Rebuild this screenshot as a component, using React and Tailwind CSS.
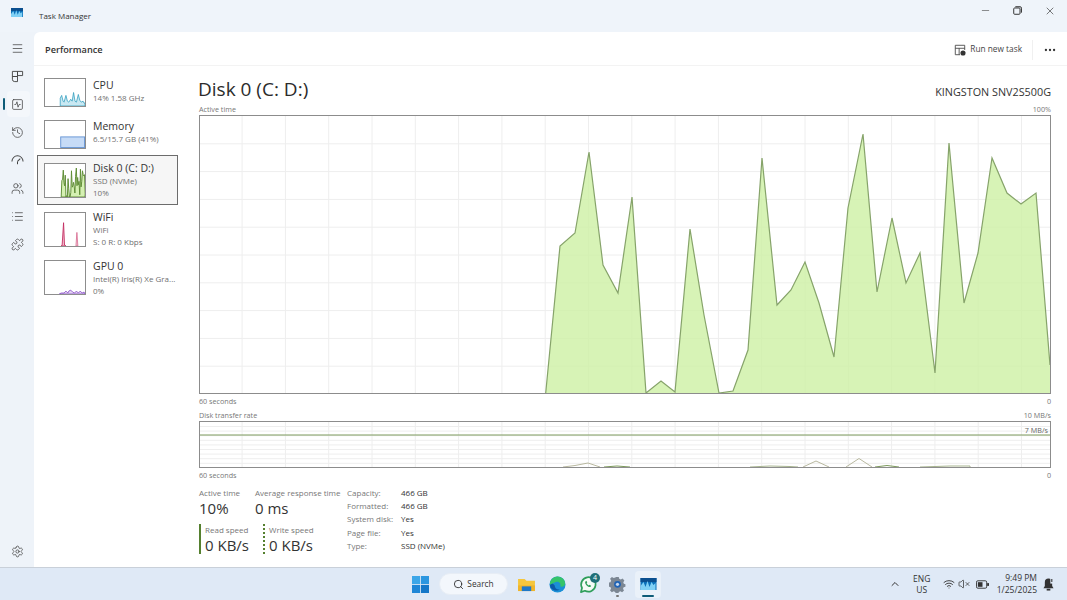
import { Menu, SquareActivity, History, Users, List, Puzzle, Settings, MoreHorizontal, Minus, X, Search, ChevronUp, Wifi, VolumeX } from 'lucide-react'

// main chart points, page coordinates
const activeTime = [
  [545.7, 393], [560, 246], [575, 233], [589, 152], [603, 265], [618, 293], [632, 197], [646, 393],
  [661, 381], [675, 392], [690, 229], [704, 315], [719, 393], [733, 391], [748, 350], [762, 158],
  [777, 305], [791, 290], [805, 262], [819, 303], [834, 357], [848, 208], [863, 134], [877, 292],
  [892, 218], [906, 283], [920, 253], [935, 373], [949, 143], [964, 303], [978, 253], [992, 158],
  [1007, 193], [1021, 204], [1036, 193], [1050, 365],
]

const pts = (list) => list.map(p => p.join(',')).join(' ')
const mainFill = pts([...activeTime, [1050, 393]])
const vLines = Array.from({ length: 20 }, (_, i) => 1021.5 - i * 43.3)
const hLines = Array.from({ length: 9 }, (_, i) => 143.8 + i * 27.8)
const rateLines = Array.from({ length: 9 }, (_, i) => 426.5 + i * 4.6)

// disk thumbnail is the same trace squeezed down
const diskThumb = activeTime.map(([x, y]) => [
  +(17 + (x - 545.7) * 0.05).toFixed(1),
  +(34 - (393 - y) * 0.115).toFixed(1),
])

const perfItems = [
  { name: 'CPU', lines: ['14%  1.58 GHz'], h: 'h-[41px]', thumb: 'cpu', lift: '-mt-[2px]' },
  { name: 'Memory', lines: ['6.5/15.7 GB (41%)'], h: 'h-[42px]', thumb: 'mem', lift: '-mt-[4px]' },
  { name: 'Disk 0 (C: D:)', lines: ['SSD (NVMe)', '10%'], h: 'h-[50px]', thumb: 'disk', selected: true },
  { name: 'WiFi', lines: ['WiFi', 'S: 0 R: 0 Kbps'], h: 'h-[48px]', thumb: 'wifi' },
  { name: 'GPU 0', lines: ['Intel(R) Iris(R) Xe Gra...', '0%'], h: 'h-[48px]', thumb: 'gpu', lift: 'mt-[2px]' },
]

function Thumb({ kind }) {
  const tall = kind === 'disk' || kind === 'wifi' || kind === 'gpu'
  const h = tall ? 34 : 28
  return (
    <div className={`w-[42px] shrink-0 border border-[#8d8d8d] bg-white ${tall ? 'h-[35px]' : 'h-[29px]'}`}>
      <svg viewBox={`0 0 42 ${h}`} className="block w-full h-full" preserveAspectRatio="none">
        {kind === 'cpu' && (
          <polygon
            points="16,28 16,20 17.5,17 19,23 20,24 22,17 23.5,23 25,24 27,21 28.5,23 30,14 31.5,23 33,24 35,16 36.5,22 38,24 40,23 41,25 42,25 42,28"
            fill="#c9e8f2" stroke="#2f9dbd" strokeWidth="0.8"
          />
        )}
        {kind === 'mem' && <rect x="16.5" y="16.5" width="25" height="11" fill="#c6dbf6" stroke="#6a98d6" />}
        {kind === 'disk' && (
          <polygon points={pts([...diskThumb, [42, 34]])} fill="#d5f0b2" stroke="#5f8c35" strokeWidth="1" />
        )}
        {kind === 'wifi' && (
          <>
            <polygon points="17,34 18,33 19.5,10 20.5,33 22,34" fill="#f3bccd" stroke="#c2285e" strokeWidth="0.9" />
            <polygon points="32.5,34 33.5,20 34.5,34" fill="#f5cfdb" stroke="#d5648b" strokeWidth="0.8" />
          </>
        )}
        {kind === 'gpu' && (
          <polygon
            points="15,34 17,33 20,33 22,31 24,33 25,31 27,30 29,32 31,33 33,31 35,33 37,31 39,33 41,32 42,34"
            fill="#e3d4f3" stroke="#8c55c8" strokeWidth="0.9"
          />
        )}
      </svg>
    </div>
  )
}

function PerfRow({ item }) {
  return (
    <div className={`${item.h} flex items-center gap-[7px] pl-[6px] ${item.selected ? 'border border-[#6c6c6c] bg-[#f6f6f6]' : 'border border-transparent'}`}>
      <Thumb kind={item.thumb} />
      <div className={`min-w-0 ${item.lift || ''}`}>
        <div className="text-[10.5px] leading-[13px] text-[#333]">{item.name}</div>
        {item.lines.map(l => (
          <div key={l} className="text-[8px] leading-[11.5px] text-[#707070] whitespace-nowrap">{l}</div>
        ))}
      </div>
    </div>
  )
}

function ProcessesIcon() {
  return (
    <svg viewBox="0 0 14 14" className="w-[13px] h-[13px]" fill="none" stroke="#444" strokeWidth="1">
      <path d="M1.5 1.5h5.5v5.5h-5.5zM7 1.5h5.5v4.5h-5.5zM1.5 7h5.5v5.5h-3a2.5 2.5 0 0 1-2.5-2.5z" />
    </svg>
  )
}

function StartupIcon() {
  return (
    <svg viewBox="0 0 14 14" className="w-[13px] h-[13px]" fill="none" stroke="#444" strokeWidth="1.1">
      <path d="M1 8a6 6 0 0 1 12 0" />
      <path d="M7 8l3-3" />
      <path d="M7 8v3" />
    </svg>
  )
}

function Sidebar() {
  const iconClass = 'w-[13px] h-[13px] text-[#444]'
  const icons = [
    <Menu key="m" className={iconClass} strokeWidth={1.4} />,
    <ProcessesIcon key="p" />,
    <SquareActivity key="a" className={iconClass} strokeWidth={1.4} />,
    <History key="h" className={iconClass} strokeWidth={1.4} />,
    <StartupIcon key="s" />,
    <Users key="u" className={iconClass} strokeWidth={1.4} />,
    <List key="l" className={iconClass} strokeWidth={1.4} />,
    <Puzzle key="z" className={iconClass} strokeWidth={1.4} />,
  ]
  return (
    <div className="w-[34px] shrink-0 flex flex-col bg-[#eef3f9]">
      <div className="flex flex-col items-center pt-[2px]">
        {icons.map((icon, i) => (
          <div key={i} className="relative h-[28px] w-full flex items-center justify-center">
            {i === 2 && (
              <>
                <div className="absolute left-[7px] right-[4px] top-[1px] bottom-[1px] rounded bg-[#f4f7fb]" />
                <div className="absolute left-[3px] top-[8px] h-[12px] w-[2px] rounded bg-[#0f5c78]" />
              </>
            )}
            <span className="relative flex">{icon}</span>
          </div>
        ))}
      </div>
      <div className="mt-auto h-[22px] flex items-start justify-center">
        <Settings className={iconClass} strokeWidth={1.4} />
      </div>
    </div>
  )
}

function MainChart() {
  return (
    <div className="h-[279px] border border-[#8c8c8c]">
      <svg viewBox="200 116 850 277" className="block w-full h-full">
        {hLines.map(y => <line key={y} x1="200" x2="1050" y1={y} y2={y} stroke="#eeeeee" />)}
        {vLines.map(x => <line key={x} x1={x} x2={x} y1="116" y2="393" stroke="#eeeeee" />)}
        <polygon points={mainFill} fill="#cdf0a4" fillOpacity="0.8" />
        <polyline points={pts(activeTime)} fill="none" stroke="#86a36a" strokeWidth="1.2" />
      </svg>
    </div>
  )
}

function RateChart() {
  return (
    <div className="relative h-[47px] border border-[#8c8c8c]">
      <svg viewBox="200 422 850 45" className="block w-full h-full">
        {rateLines.map(y => <line key={y} x1="200" x2="1050" y1={y} y2={y} stroke="#eeeeee" />)}
        {vLines.map(x => <line key={x} x1={x} x2={x} y1="422" y2="467" stroke="#eeeeee" />)}
        <line x1="200" x2="1050" y1="435" y2="435" stroke="#7d9a5c" strokeWidth="1.2" />
        <polyline points="563,467 575,465.5 588,463 600,467" fill="none" stroke="#b9b9a0" />
        <polyline points="604,467 617,466 630,467" fill="none" stroke="#7d9a5c" />
        <polyline points="750,467 770,466 790,466.5 798,467" fill="none" stroke="#a7b48f" />
        <polyline points="803,467 816,461 829,467" fill="none" stroke="#b9b9a0" />
        <polyline points="846,467 859,458.5 872,467" fill="none" stroke="#b9b9a0" />
        <polyline points="875,467 887,465.5 899,467" fill="none" stroke="#7d9a5c" />
        <polyline points="920,467 950,466 970,466 970,467" fill="none" stroke="#a7b48f" />
      </svg>
      <span className="absolute right-[2px] top-[3px] text-[7.2px] leading-[10px] text-[#666]">7 MB/s</span>
    </div>
  )
}

function AxisLabels({ left, right, className }) {
  return (
    <div className={`flex justify-between text-[7.2px] leading-[10px] text-[#777] ${className}`}>
      <span>{left}</span>
      <span>{right}</span>
    </div>
  )
}

function Stat({ label, value, className }) {
  return (
    <div className={className}>
      <div className="text-[8px] leading-[12px] text-[#777] whitespace-nowrap">{label}</div>
      <div className="text-[15px] leading-[18px] text-[#333] whitespace-nowrap">{value}</div>
    </div>
  )
}

function Details() {
  const facts = [['Capacity:', '466 GB'], ['Formatted:', '466 GB'], ['System disk:', 'Yes'], ['Page file:', 'Yes'], ['Type:', 'SSD (NVMe)']]
  return (
    <div className="flex-1 min-w-0 pl-[9px] pr-[16px] flex flex-col">
      <div className="h-[37px] flex items-end justify-between">
        <div className="-ml-[1px] text-[19px] leading-[28px] text-[#2b2b2b]">Disk 0 (C: D:)</div>
        <div className="text-[10.8px] leading-[16px] text-[#333] pb-[3px]">KINGSTON SNV2S500G</div>
      </div>
      <AxisLabels left="Active time" right="100%" className="h-[12px] items-center" />
      <MainChart />
      <AxisLabels left="60 seconds" right="0" className="mt-[2px] h-[10px]" />
      <AxisLabels left="Disk transfer rate" right="10 MB/s" className="mt-[4px] h-[10px]" />
      <div className="mt-[1px]"><RateChart /></div>
      <AxisLabels left="60 seconds" right="0" className="mt-[2px] h-[10px]" />
      <div className="mt-[7px] flex">
        <div className="w-[148px] shrink-0">
          <div className="flex">
            <Stat label="Active time" value="10%" className="w-[56px] shrink-0" />
            <Stat label="Average response time" value="0 ms" />
          </div>
          <div className="flex mt-[7px]">
            <div className="w-[64px] border-l-2 border-[#55802f] pl-[4px] h-[30px]">
              <Stat label="Read speed" value="0 KB/s" />
            </div>
            <div className="border-l-2 border-dotted border-[#55802f] pl-[4px] h-[30px]">
              <Stat label="Write speed" value="0 KB/s" />
            </div>
          </div>
        </div>
        <div className="-mt-[1px]">
          {facts.map(([k, v]) => (
            <div key={k} className="flex h-[13.4px] items-center text-[8px]">
              <span className="w-[54px] text-[#777]">{k}</span>
              <span className="text-[#333]">{v}</span>
            </div>
          ))}
        </div>
      </div>
    </div>
  )
}

function TaskManagerIcon({ size = 'w-[12px] h-[9px]' }) {
  return (
    <svg viewBox="0 0 16 12" className={size}>
      <rect width="16" height="12" fill="#0a6fb8" />
      <rect width="16" height="4" fill="#0a4f8f" />
      <path d="M0 12V8l3-4 2 5 2-6 2 6 2-5 2 3 2-2v7z" fill="#7fd0f5" />
    </svg>
  )
}

function WindowsLogo() {
  return (
    <svg viewBox="0 0 16 16" className="w-[17px] h-[17px]">
      <rect x="0" y="0" width="7.6" height="7.6" fill="#3ca6e8" />
      <rect x="8.4" y="0" width="7.6" height="7.6" fill="#2b96e0" />
      <rect x="0" y="8.4" width="7.6" height="7.6" fill="#1f86d6" />
      <rect x="8.4" y="8.4" width="7.6" height="7.6" fill="#1577c8" />
    </svg>
  )
}

function FolderIcon() {
  return (
    <svg viewBox="0 0 18 16" className="w-[17px] h-[15px]">
      <path d="M0 2h7l2 2h9v11H0z" fill="#f5c63c" />
      <rect x="0" y="9" width="18" height="6" fill="#f0b429" />
      <rect x="4" y="10" width="10" height="5" fill="#1e78c8" />
    </svg>
  )
}

function EdgeIcon() {
  return (
    <svg viewBox="0 0 18 18" className="w-[17px] h-[17px]">
      <circle cx="9" cy="9" r="8.5" fill="#1b8fd6" />
      <path d="M1 9a8 8 0 0 1 16-1c0 3-3 4-5 3 1-4-3-6-6-4-3 1-4 3-5 2z" fill="#35c46a" />
      <path d="M6 10c0 3 3 5 6 4-4 3-10 1-11-4 1-2 3-3 5 0z" fill="#0c5aa8" />
    </svg>
  )
}

function WhatsAppIcon() {
  return (
    <div className="relative w-[20px] h-[20px]">
      <svg viewBox="0 0 20 20" className="w-[19px] h-[19px] mt-[1px]" fill="none">
        <path d="M2 18l1.2-4.4A7.6 7.6 0 1 1 6.2 16.6z" fill="#f4fbf6" stroke="#2f9e5b" strokeWidth="1.8" strokeLinejoin="round" />
        <path d="M7 6.5c-1 1-.6 2.6.8 4.2 1.5 1.7 3.2 2.4 4.4 1.6l.6-1-1.8-1-.8.7c-.9-.4-1.7-1.2-2.2-2.2l.7-.8-.9-1.9z" fill="#2f9e5b" />
      </svg>
      <span className="absolute -right-[1px] -top-[2px] w-[10px] h-[10px] rounded-full bg-[#1f6f78] text-white text-[7px] leading-[10px] text-center">4</span>
    </div>
  )
}

function GearApp() {
  return (
    <svg viewBox="0 0 18 18" className="w-[17px] h-[17px]">
      <path d="M7.5 1h3l.5 2.2 1.8.8 2-1.2 2 2.2-1.2 2 .6 1.7 1.8.5v3l-2 .5-.7 1.7 1.1 2-2.1 2-2-1.1-1.7.6-.6 2h-3l-.5-2-1.8-.7-2 1.1-2-2.1 1.1-2-.7-1.7-2-.5V7.5l2.1-.6.7-1.7-1.2-2 2.1-2.1 2 1.2 1.7-.7z" fill="#7c8794" transform="scale(0.94) translate(0.5 0)" />
      <circle cx="9" cy="8.8" r="3.6" fill="#1f63b5" />
      <circle cx="9" cy="8.8" r="1.7" fill="#c7d8ee" />
    </svg>
  )
}

function BatteryIcon() {
  return (
    <svg viewBox="0 0 14 9" className="w-[13px] h-[9px]">
      <rect x="0.5" y="0.5" width="11" height="8" rx="1.5" fill="none" stroke="#333" />
      <rect x="2" y="2" width="5" height="5" fill="#333" />
      <rect x="12" y="3" width="2" height="3" fill="#333" />
    </svg>
  )
}

function BellIcon() {
  return (
    <svg viewBox="0 0 12 14" className="w-[11px] h-[13px]">
      <path d="M6 0.5a4 4 0 0 1 4 4v4l1.5 2.5H.5L2 8.5v-4a4 4 0 0 1 4-4z" fill="#333" />
      <rect x="4" y="11.6" width="4" height="2" fill="#333" />
      <rect x="8" y="0" width="3" height="6" fill="#dfe9f6" />
      <rect x="9" y="1" width="1.2" height="3.2" fill="#333" />
    </svg>
  )
}

function Taskbar() {
  return (
    <div className="h-[33px] shrink-0 flex items-center border-t border-[#c9d0d9] bg-[#dfe9f6] pl-[412px] pr-[13px]">
      <WindowsLogo />
      <div className="ml-[10px] h-[22px] w-[69px] rounded-full bg-[#f3f7fc] flex items-center justify-center gap-[3px] border border-[#e7edf5]">
        <Search className="w-[11px] h-[11px] text-[#222]" strokeWidth={1.8} />
        <span className="text-[8.3px] text-[#333]">Search</span>
      </div>
      <div className="ml-[10px]"><FolderIcon /></div>
      <div className="ml-[14px]"><EdgeIcon /></div>
      <div className="ml-[13px]"><WhatsAppIcon /></div>
      <div className="ml-[10px] relative h-[26px] flex items-center">
        <GearApp />
        <span className="absolute bottom-0 left-[7px] w-[3px] h-[2px] rounded bg-[#777]" />
      </div>
      <div className="ml-[9px] relative w-[26px] h-[27px] rounded bg-[#eaf1f9] flex items-center justify-center">
        <TaskManagerIcon size="w-[17px] h-[12px]" />
        <span className="absolute bottom-[1px] left-[7px] w-[12px] h-[2px] rounded bg-[#0f5c78]" />
      </div>
      <div className="ml-auto flex items-center">
        <ChevronUp className="w-[12px] h-[12px] text-[#333]" strokeWidth={2} />
        <div className="ml-[10px] w-[22px] text-center text-[8.5px] leading-[11px] text-[#333]">
          <div>ENG</div>
          <div>US</div>
        </div>
        <Wifi className="ml-[10px] w-[12px] h-[12px] text-[#333]" strokeWidth={1.8} />
        <VolumeX className="ml-[3px] w-[12px] h-[12px] text-[#333]" strokeWidth={1.5} />
        <div className="ml-[6px] flex"><BatteryIcon /></div>
        <div className="ml-[8px] text-right text-[8.5px] leading-[12px] text-[#333]">
          <div>9:49 PM</div>
          <div>1/25/2025</div>
        </div>
        <div className="ml-[6px] flex"><BellIcon /></div>
      </div>
    </div>
  )
}

export default function App() {
  return (
    <div className="w-[1067px] h-[600px] overflow-hidden flex flex-col bg-[#eef3f9] font-['Open_Sans',sans-serif]">
      {/* Title bar */}
      <div className="h-[32px] shrink-0 flex items-center pl-[11px] pr-[11px] bg-[#eff4fa]">
        <div className="-mt-[8px] flex"><TaskManagerIcon /></div>
        <span className="ml-[16px] text-[8px] text-[#333]">Task Manager</span>
        <div className="ml-auto -mt-[11px] flex items-center">
          <Minus className="w-[11px] h-[11px] text-[#444]" strokeWidth={1.3} />
          <svg viewBox="0 0 10 10" className="ml-[22px] w-[9px] h-[9px]" fill="none" stroke="#333" strokeWidth="1.1">
            <rect x="0.8" y="2.2" width="7" height="7" rx="1" />
            <path d="M2.6 0.8h5.2a1.6 1.6 0 0 1 1.6 1.6v5" />
          </svg>
          <X className="ml-[22px] w-[12px] h-[12px] text-[#333]" strokeWidth={1.3} />
        </div>
      </div>

      <div className="flex-1 min-h-0 flex">
        <Sidebar />
        {/* Performance page */}
        <div className="flex-1 min-w-0 flex flex-col bg-white rounded-tl-md">
          <div className="h-[34px] shrink-0 flex items-center pl-[11px] pr-[10px] pt-[2px] border-b border-[#f3f3f3]">
            <span className="text-[9.2px] font-semibold text-[#333]">Performance</span>
            <div className="ml-auto flex items-center h-full">
              <svg viewBox="0 0 14 14" className="w-[12px] h-[12px]" fill="none" stroke="#444">
                <path d="M7 12.5H1.5v-11h11V7M1.5 5h11M6 5v7.5" />
                <circle cx="10.5" cy="10.5" r="3" fill="#333" stroke="none" />
              </svg>
              <span className="ml-[4px] text-[8.3px] text-[#444]">Run new task</span>
              <div className="ml-[10px] h-[20px] w-px bg-[#f0f0f0]" />
              <MoreHorizontal className="ml-[10px] w-[14px] h-[14px] text-[#333]" strokeWidth={2} />
            </div>
          </div>
          <div className="flex-1 min-h-0 flex">
            <div className="w-[156px] shrink-0 pl-[3px] pr-[12px] pt-[6px]">
              {perfItems.map(item => <PerfRow key={item.name} item={item} />)}
            </div>
            <Details />
          </div>
        </div>
      </div>

      <Taskbar />
    </div>
  )
}
